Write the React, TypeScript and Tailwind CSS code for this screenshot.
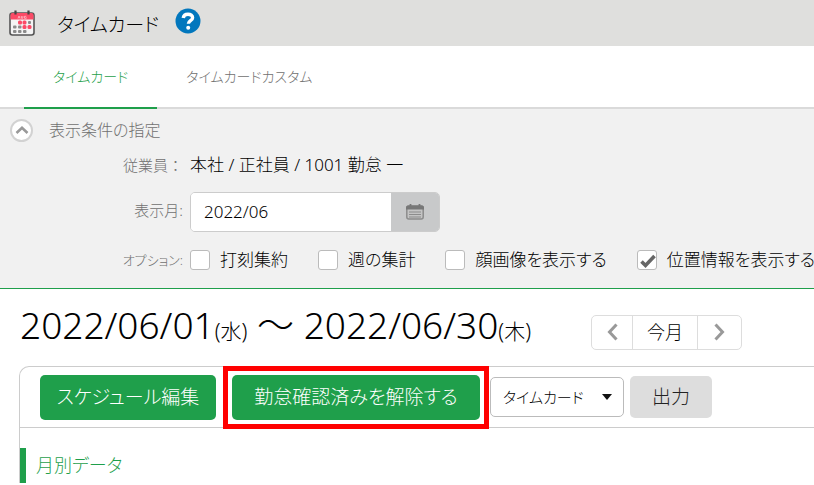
const options = [
    { id: "summary", label: "打刻集約", checked: false },
    { id: "weekly", label: "週の集計", checked: false },
    { id: "face", label: "顔画像を表示する", checked: false },
    { id: "location", label: "位置情報を表示する", checked: true },
];

function CalendarLogo() {
    return (
        <svg viewBox="0 0 26 26" className="w-[26px] h-[26px]" aria-hidden="true">
            <rect x="1" y="3" width="24" height="22" rx="2.5" fill="#f4f4f4" stroke="#555" strokeWidth="1.6" />
            <path d="M1.500 5a2 2 0 0 1 2-2h19a2 2 0 0 1 2 2v4.500h-23z" fill="#fb4a66" />
            <path d="M9 8.500l1-2.500 1 2.500M12.300 6v2.200h1.600V6M17.300 6.300h-1.800v2h1.800V7.400" stroke="#ffc2cc" strokeWidth=".8" fill="none" />
            <path d="M6.500 .5v4M19.500 .5v4" stroke="#444" strokeWidth="2.200" />
            <g fill="#fb4a66">
                <rect x="9" y="10.500" width="4" height="4" rx="1.500" />
                <rect x="13.500" y="10.500" width="4" height="4" rx="1.500" />
                <rect x="13.500" y="15" width="4" height="4" rx="1.500" />
                <rect x="18.500" y="15" width="4" height="4" rx="1.500" />
            </g>
            <g fill="#8b8b8b">
                <rect x="19" y="11" width="3" height="3" rx="1" />
                <rect x="4" y="15.500" width="3.500" height="3" rx="1" />
                <rect x="9" y="15.500" width="3.500" height="3" rx="1" />
                <rect x="4" y="20" width="3.500" height="3" rx="1" />
                <rect x="9" y="20" width="3.500" height="3" rx="1" />
                <rect x="14" y="20" width="3.500" height="3" rx="1" />
            </g>
        </svg>
    );
}

function MonthIcon() {
    return (
        <svg viewBox="0 0 18 16" className="w-[18px] h-4" aria-hidden="true">
            <rect x=".8" y="2" width="16.400" height="13" rx="2" fill="#c4c4c4" stroke="#8c8c8c" strokeWidth="1.500" />
            <path d="M0 5.500V3.500a2 2 0 0 1 2-2h14a2 2 0 0 1 2 2v2z" fill="#777" />
            <path d="M4.500 0v3M13.500 0v3" stroke="#777" strokeWidth="1.800" />
            <path d="M3 8h12M3 10.500h12M3 13h12" stroke="#8c8c8c" strokeWidth="1" />
        </svg>
    );
}

export default function App() {
    return (
        <div className="min-h-screen overflow-hidden whitespace-nowrap bg-white font-light text-black [font-family:'Noto_Sans','Noto_Sans_CJK_JP',sans-serif] [font-feature-settings:'palt']">
            <header className="flex h-[46px] items-center bg-[#dfdfdd] pl-[9px]">
                <CalendarLogo />
                <h1 className="ml-[22px] pt-1 text-[19px] leading-6">タイムカード</h1>
                <a href="#" aria-label="ヘルプ" className="mb-1 ml-4">
                    <svg viewBox="0 0 26 26" className="w-[26px] h-[26px]">
                        <circle cx="13" cy="13" r="12.500" fill="#0277bd" />
                        <path d="M8.200 10C8.600 7.400 10.500 6.200 13 6.200c2.700 0 4.600 1.400 4.600 3.500 0 3-4.200 3-4.200 6" fill="none" stroke="#fff" strokeWidth="3.400" />
                        <circle cx="13.200" cy="19.800" r="2" fill="#fff" />
                    </svg>
                </a>
            </header>

            {/* Tabs */}
            <nav className="flex border-b-2 border-[#dadada] pl-6 text-[14px] text-[#707070]">
                <a href="#" className="-mb-0.5 border-b-2 border-[#1f9f4b] px-[29px] pt-5 pb-[19px] leading-[22px] text-[#1f9f4b]">タイムカード</a>
                <a href="#" className="px-[29px] pt-5 leading-[22px]">タイムカードカスタム</a>
            </nav>

            {/* Filter panel */}
            <section className="border-b border-[#1f9f4b] bg-[#f1f1f1] pt-[9px] pb-4">
                <div className="flex items-center gap-4 pl-2.5">
                    <button aria-label="閉じる" className="flex h-[23px] w-[23px] items-center justify-center rounded-full border-2 border-[#d2d2d2] bg-white">
                        <svg viewBox="0 0 14 10" className="h-2.5 w-3.5">
                            <path d="M1.500 8 7 2.800 12.500 8" fill="none" stroke="#999" strokeWidth="2.600" />
                        </svg>
                    </button>
                    <h2 className="text-base leading-6 text-[#707070]">表示条件の指定</h2>
                </div>

                <div className="grid grid-cols-[183px_1fr] items-center gap-x-[7px]">
                    <span className="py-[13px] text-right text-[15px] leading-5 text-[#707070] [font-feature-settings:normal]">従業員：</span>
                    <span className="text-[17px] leading-5">本社 / 正社員 / 1001 勤怠 一</span>

                    <label htmlFor="month" className="text-right text-[15px] leading-5 text-[#707070]">表示月:</label>
                    <div className="mt-1 flex h-10 w-[250px] overflow-hidden rounded-[5px] border border-[#ccc]">
                        <input id="month" type="text" defaultValue="2022/06" className="min-w-0 flex-1 bg-white px-[13px] text-[17px] outline-none" />
                        <button aria-label="カレンダー" className="flex w-12 items-center justify-center bg-[#c8c9ca]">
                            <MonthIcon />
                        </button>
                    </div>

                    <span className="pt-4 text-right text-[13px] leading-6 text-[#707070]">オプション:</span>
                    <div className="flex items-center gap-[30px] pt-4">
                        {options.map((option) => (
                            <label key={option.id} className="flex items-center gap-2.5 text-[17px] leading-6">
                                <span className="grid">
                                    <input
                                        type="checkbox"
                                        defaultChecked={option.checked}
                                        className="peer col-start-1 row-start-1 h-5 w-5 appearance-none rounded-[3px] border border-[#bbb] bg-white"
                                    />
                                    <svg viewBox="0 0 20 20" className="pointer-events-none invisible col-start-1 row-start-1 h-5 w-5 peer-checked:visible">
                                        <path d="M4.500 11.500 8.500 15.500 17.500 6" fill="none" stroke="#666" strokeWidth="3.600" />
                                    </svg>
                                </span>
                                {option.label}
                            </label>
                        ))}
                    </div>
                </div>
            </section>

            {/* Period */}
            <div className="flex items-center gap-[60px] pt-3.5 pl-5">
                <h2 className="pb-1 text-[37px] leading-[44px]">
                    2022/06/01<small className="text-[21px] leading-none">(水)</small> 〜 2022/06/30<small className="text-[21px] leading-none">(木)</small>
                </h2>
                <div className="mt-2.5 flex h-[35px] divide-x divide-[#ddd] rounded-[5px] border border-[#ddd] text-[18px]">
                    <button aria-label="前月" className="flex w-[41px] items-center justify-center">
                        <svg viewBox="0 0 11 18" className="h-[18px] w-[11px]">
                            <path d="M9.500 1.500 2.500 9l7 7.500" fill="none" stroke="#999" strokeWidth="3" />
                        </svg>
                    </button>
                    <button className="w-[65px]">今月</button>
                    <button aria-label="翌月" className="flex w-[43px] items-center justify-center">
                        <svg viewBox="0 0 11 18" className="h-[18px] w-[11px]">
                            <path d="M1.500 1.500 8.500 9l-7 7.500" fill="none" stroke="#999" strokeWidth="3" />
                        </svg>
                    </button>
                </div>
            </div>

            <main className="mt-[15px] ml-[19px] rounded-tl-[10px] border-t border-l border-[#ccc]">
                <div className="flex h-[61px] items-center border-b border-[#ccc] pl-5">
                    <button className="h-[45px] w-44 rounded-[5px] bg-[#1f9f4b] text-[19px] text-white">スケジュール編集</button>
                    <div className="-my-1 ml-[7px] border-[5px] border-[#f00] bg-white p-1">
                        <button className="h-[45px] w-[248px] rounded-[5px] bg-[#1f9f4b] text-[19px] text-white">勤怠確認済みを解除する</button>
                    </div>
                    <div className="ml-px grid w-[134px] items-center">
                        <select aria-label="出力形式" className="col-start-1 row-start-1 h-10 appearance-none rounded-[5px] border border-[#bbb] bg-white pl-3 text-[15px]">
                            <option>タイムカード</option>
                        </select>
                        <svg viewBox="0 0 10 6" className="pointer-events-none col-start-1 row-start-1 mr-3 h-1.5 w-2.5 justify-self-end">
                            <path d="M0 0h10L5 6z" fill="#111" />
                        </svg>
                    </div>
                    <button className="ml-1.5 h-[42px] w-[82px] rounded-[5px] bg-[#ddd] text-[19px] text-[#222]">出力</button>
                </div>
                <h3 className="mt-5 border-l-[6px] border-[#1f9f4b] pl-2.5 text-[18px] leading-[35px] text-[#1f9f4b]">月別データ</h3>
            </main>
        </div>
    );
}
